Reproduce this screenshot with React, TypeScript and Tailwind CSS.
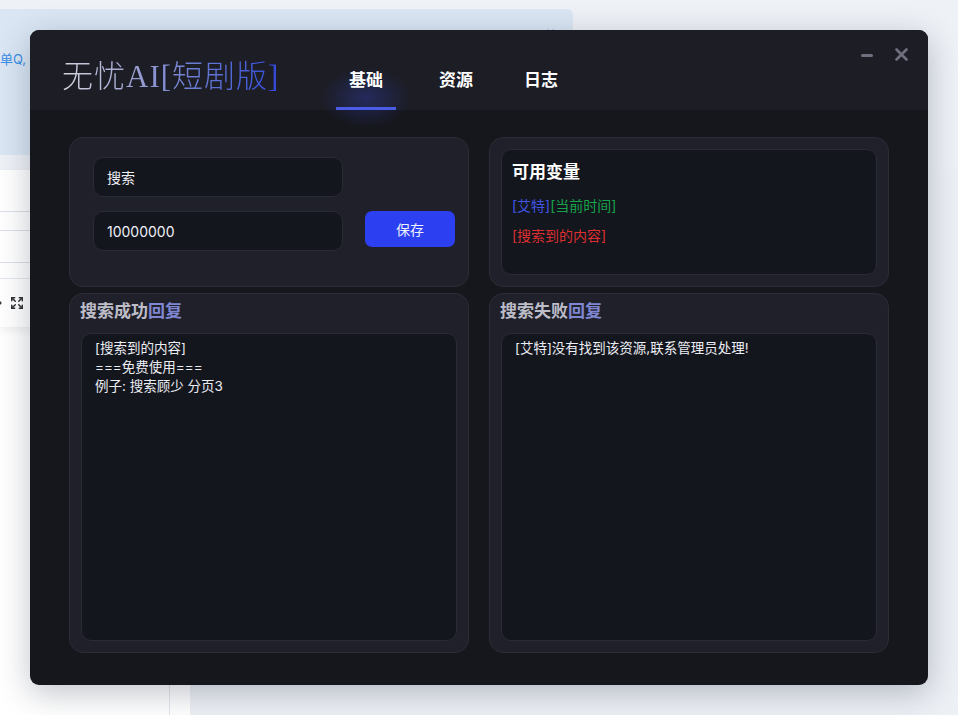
import React, { useState } from 'react';
import { Expand, ChevronRight } from 'lucide-react';

const tabs = ['基础', '资源', '日志'];

const Panel: React.FC<{ className?: string; children: React.ReactNode }> = ({ className = '', children }) => (
  <div className={`rounded-[14px] border border-[#2c2c37] bg-[#20202a] ${className}`}>{children}</div>
);

const ReplyPanel: React.FC<{ head: string; tail: string; text: string }> = (props) => (
  <Panel className="flex flex-col px-[11px] pt-[5px] pb-[11px]">
    <div className="ml-[-1px] h-[24px] text-[17px] leading-[24px] font-bold">
      <span className="text-[#bdbdc8]">{props.head}</span>
      <span className="text-[#7f87d2]">{props.tail}</span>
    </div>
    <textarea
      className="mt-[10px] flex-1 resize-none rounded-[10px] border border-[#2a2b35] bg-[#14161e] px-[13px] py-[5px] text-[13.5px] leading-[19px] text-[#eceef4] outline-none"
      defaultValue={props.text}
    />
  </Panel>
);

export default function App() {
  const [active, setActive] = useState(0);

  return (
    <div className="relative h-[715px] w-full overflow-hidden bg-[#eef1f6] font-['Inter','Noto_Sans_CJK_SC',sans-serif]">
      {/* page behind the dialog */}
      <div className="relative mt-[9px] h-[146px] w-[573px] rounded-r-md bg-[#dae6f3]">
        <div className="pt-[41px] text-[13px] text-[#3a8ee6]">单Q,</div>
        <div className="absolute right-[18px] top-[11px] text-[14px] text-[#8cb9ec]">×</div>
      </div>
      <div className="mt-[15px] flex h-[545px]">
        <div className="flex w-[190px] flex-col bg-white">
          <div className="w-[170px] shadow-[0_4px_8px_rgba(0,0,0,0.06)]">
            <div className="h-[42px] border-b border-[#dcdfe6]" />
            <div className="h-[19px] border-b border-[#dcdfe6]" />
            <div className="h-[32px] border-b border-[#dcdfe6]" />
            <div className="h-[16px] border-b border-[#e4e7ed]" />
            <div className="flex h-[48px] items-center gap-[4px] text-[#303133]">
              <ChevronRight className="ml-[-8px] h-[14px] w-[14px]" strokeWidth={3} />
              <Expand className="h-[14px] w-[14px]" strokeWidth={2.5} />
            </div>
          </div>
          <div className="flex-1" />
          <div className="flex h-[30px]">
            <div className="w-[170px] border-r border-[#e4e7ed]" />
          </div>
        </div>
        <div className="flex-1 bg-[#edf0f5]" />
      </div>

      {/* dialog */}
      <div className="absolute left-[30px] top-[30px] flex h-[655px] w-[898px] flex-col overflow-hidden rounded-[9px] bg-[#16171c] shadow-[0_8px_32px_rgba(30,40,60,0.28)]">
        <div className="relative flex h-[80px] shrink-0 items-start bg-[#1c1d25] px-[32px]">
          <div className="mt-[29px] w-[274px]">
            <span className="inline-block whitespace-nowrap bg-gradient-to-r from-[#d6d6de] via-[#9096d0] via-40% to-[#3346da] bg-clip-text font-['Liberation_Serif','Noto_Sans_CJK_SC',serif] text-[31px] font-light leading-[36px] tracking-[1px] text-transparent">
              无忧AI[短剧版]
            </span>
          </div>
          <div className="flex h-full">
            {tabs.map((tab, i) => (
              <button
                key={tab}
                onClick={() => setActive(i)}
                className={`relative flex h-full w-[60px] flex-col items-center justify-end ${i === 1 ? 'ml-[30px]' : ''} ${i === 2 ? 'ml-[25px]' : ''}`}
              >
                {active === i && (
                  <div className="absolute bottom-[-18px] left-1/2 h-[60px] w-[90px] -translate-x-1/2 rounded-full bg-[radial-gradient(closest-side,rgba(55,72,220,0.3),rgba(55,72,220,0))]" />
                )}
                <span className="relative mb-[15px] text-[17px] font-bold leading-[24px] text-white">{tab}</span>
                <span className={`relative h-[3px] w-[60px] ${active === i ? 'bg-[#4a5ce6]' : 'bg-transparent'}`} />
              </button>
            ))}
          </div>
          <div className="absolute right-[20px] top-[18px] flex items-center gap-[22px] text-[#6f6f7d]">
            <span className="mt-[2px] block h-[3px] w-[12px] rounded-sm bg-[#6f6f7d]" />
            <svg width="13" height="13" viewBox="0 0 13 13">
              <path d="M1.5 1.5 L11.5 11.5 M11.5 1.5 L1.5 11.5" stroke="#6f6f7d" strokeWidth="2.6" strokeLinecap="round" />
            </svg>
          </div>
        </div>

        <div className="grid flex-1 grid-cols-2 grid-rows-[150px_1fr] gap-x-[20px] gap-y-[6px] px-[39px] pt-[27px] pb-[32px]">
          <Panel className="flex flex-col gap-[14px] pl-[23px] pt-[19px]">
            <input
              className="h-[40px] w-[250px] rounded-[10px] border border-[#2a2b35] bg-[#14161e] px-[13px] text-[14px] text-[#eef0f6] outline-none"
              defaultValue="搜索"
            />
            <div className="flex items-start gap-[22px]">
              <input
                className="h-[40px] w-[250px] rounded-[10px] border border-[#2a2b35] bg-[#14161e] px-[13px] text-[14px] text-[#eef0f6] outline-none"
                defaultValue="10000000"
              />
              <button className="h-[36px] w-[90px] rounded-[7px] bg-[#2c40f2] text-[14px] text-[#eef0ff]">保存</button>
            </div>
          </Panel>

          <Panel className="flex p-[11px]">
            <div className="flex-1 rounded-[10px] border border-[#2a2b35] bg-[#14161e] px-[10px] pt-[10px]">
              <div className="text-[17px] font-bold leading-[24px] text-white">可用变量</div>
              <div className="mt-[12px] text-[14px] leading-[20px]">
                <span className="text-[#3f55e6]">[艾特]</span>
                <span className="text-[#16a34a]">[当前时间]</span>
              </div>
              <div className="mt-[10px] text-[14px] leading-[20px] text-[#dc2f2f]">[搜索到的内容]</div>
            </div>
          </Panel>

          <ReplyPanel head="搜索成功" tail="回复" text={'[搜索到的内容]\n===免费使用===\n例子: 搜索顾少 分页3'} />
          <ReplyPanel head="搜索失败" tail="回复" text="[艾特]没有找到该资源,联系管理员处理!" />
        </div>
      </div>
    </div>
  );
}
